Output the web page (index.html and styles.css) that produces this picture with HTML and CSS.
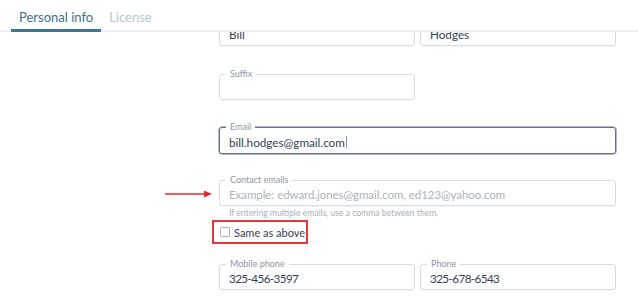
FILE: index.html
```html
<!DOCTYPE html>
<html lang="en">
<head>
  <meta charset="UTF-8">
  <title>Personal info</title>
  <link rel="stylesheet" href="styles.css">
</head>
<body>
  <div class="page">
    <header class="tabs">
      <div class="tab active">Personal info</div>
      <div class="tab">License</div>
    </header>

    <main class="form">
      <div class="row">
        <div class="field half"><span class="value">Bill</span></div>
        <div class="field half"><span class="value">Hodges</span></div>
      </div>

      <div class="row">
        <div class="field half">
          <span class="label">Suffix</span>
        </div>
      </div>

      <div class="row email-row">
        <div class="field focused">
          <span class="label">Email</span>
          <span class="value">bill.hodges@gmail.com</span><span class="caret"></span>
        </div>
      </div>

      <div class="row contact-row">
        <svg class="arrow" width="48" height="8" viewBox="0 0 48 8">
          <line x1="0" y1="4" x2="41" y2="4" stroke="#e02b2b" stroke-width="1.3"/>
          <polygon points="39,0.5 47,4 39,7.5" fill="#e02b2b"/>
        </svg>
        <div class="field">
          <span class="label">Contact emails</span>
          <span class="placeholder">Example: edward.jones@gmail.com, ed123@yahoo.com</span>
        </div>
        <p class="hint">If entering multiple emails, use a comma between them.</p>
        <div class="check-highlight">
          <span class="checkbox"></span>
          <span class="check-label">Same as above</span>
        </div>
      </div>

      <div class="row">
        <div class="field half">
          <span class="label">Mobile phone</span>
          <span class="value phone">325-456-3597</span>
        </div>
        <div class="field half">
          <span class="label">Phone</span>
          <span class="value phone">325-678-6543</span>
        </div>
      </div>
    </main>
  </div>
</body>
</html>
```

FILE: styles.css
```css
body {
  margin: 0;
  font-family: 'Lato', 'Open Sans', sans-serif;
  background-color: #fff;
  color: #2f3b55;
}

.page {
  width: 638px;
  height: 302px;
  overflow: hidden;
}

/* tab bar stays on top of the scrolled form */
.tabs {
  position: relative;
  z-index: 2;
  display: flex;
  height: 30px;
  padding-left: 11px;
  background-color: #fff;
  border-bottom: 2px solid #eceff3;
}

.tab {
  padding: 9px 8px 0;
  font-size: 13px;
  color: #b3c6d1;
}

.tab.active {
  color: #3f6f86;
  border-bottom: 3px solid #3f7590;
  margin-bottom: -2px;
}

.form {
  margin-top: -12px;
  padding-left: 219px;
  width: 397px;
}

.row {
  display: flex;
  gap: 5px;
  margin-bottom: 28px;
}

.email-row {
  margin-bottom: 26px;
}

.field {
  position: relative;
  flex: 1;
  height: 26px;
  box-sizing: border-box;
  border: 1px solid #d6dce4;
  border-radius: 3px;
  padding: 0 9px;
  display: flex;
  align-items: center;
  box-shadow: 0 1px 1px rgba(0, 0, 0, 0.04);
}

.field.half {
  flex: 0 0 196px;
}

.field.focused {
  height: 27px;
  margin-top: -1px;
  border-color: #63718c;
  box-shadow: 0 0 0 0.5px #63718c;
}

.label {
  position: absolute;
  top: -6px;
  left: 6px;
  padding: 0 4px;
  background-color: #fff;
  font-size: 9px;
  line-height: 10px;
  color: #8c95a6;
}

.value {
  font-size: 11.7px;
  color: #34405a;
  padding-top: 2px;
}

.value.phone {
  letter-spacing: -0.6px;
}

.caret {
  display: inline-block;
  width: 1px;
  height: 12px;
  margin-left: 1px;
  margin-top: 2px;
  background-color: #8a93a3;
}

.placeholder {
  font-size: 11.4px;
  color: #a9b1bf;
  padding-top: 2px;
}

.contact-row {
  position: relative;
  flex-direction: column;
  gap: 0;
  margin-bottom: 20px;
}

.arrow {
  position: absolute;
  left: -54px;
  top: 10px;
}

.contact-row .field {
  flex: none;
}

.hint {
  margin: 2px 0 0 10px;
  font-size: 8.6px;
  line-height: 11px;
  color: #a8b0bc;
}

.check-highlight {
  display: flex;
  align-items: center;
  gap: 4px;
  box-sizing: border-box;
  width: 96px;
  height: 24px;
  margin: 1px 0 0 -7px;
  padding-left: 6px;
  border: 2px solid #e2383d;
  white-space: nowrap;
}

.checkbox {
  flex: none;
  width: 8px;
  height: 8px;
  border: 1px solid #a6aebb;
  border-radius: 2px;
}

.check-label {
  font-size: 11px;
  color: #35405a;
}
```
